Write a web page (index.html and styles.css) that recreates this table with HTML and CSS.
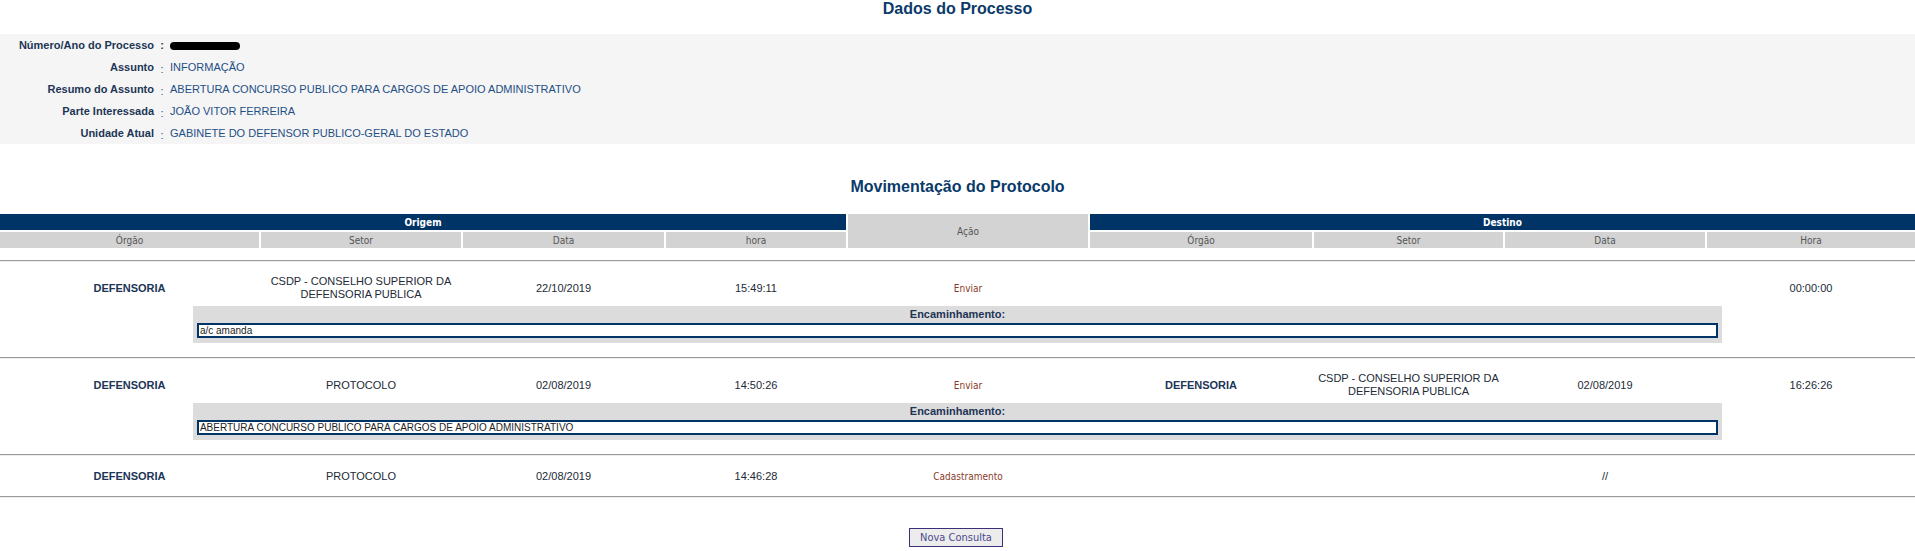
FILE: index.html
```html
<!DOCTYPE html>
<html lang="pt-BR">
<head>
<meta charset="utf-8">
<title>Dados do Processo</title>
<link rel="stylesheet" href="styles.css">
</head>
<body>
<h1 class="title">Dados do Processo</h1>
<div class="info">
  <div class="info-row"><span class="label">Número/Ano do Processo</span><span class="colon strong">:</span><span class="value"><span class="redacted"></span></span></div>
  <div class="info-row"><span class="label">Assunto</span><span class="colon">:</span><span class="value">INFORMAÇÃO</span></div>
  <div class="info-row"><span class="label">Resumo do Assunto</span><span class="colon">:</span><span class="value">ABERTURA CONCURSO PUBLICO PARA CARGOS DE APOIO ADMINISTRATIVO</span></div>
  <div class="info-row"><span class="label">Parte Interessada</span><span class="colon">:</span><span class="value">JOÃO VITOR FERREIRA</span></div>
  <div class="info-row"><span class="label">Unidade Atual</span><span class="colon">:</span><span class="value">GABINETE DO DEFENSOR PUBLICO-GERAL DO ESTADO</span></div>
</div>

<h2 class="title sub">Movimentação do Protocolo</h2>

<div class="mov-head cols">
  <div class="grp origem">Origem</div>
  <div class="acao-h">Ação</div>
  <div class="grp destino">Destino</div>
  <div class="sh">Órgão</div>
  <div class="sh">Setor</div>
  <div class="sh">Data</div>
  <div class="sh">hora</div>
  <div class="sh">Órgão</div>
  <div class="sh">Setor</div>
  <div class="sh">Data</div>
  <div class="sh">Hora</div>
</div>

<div class="rule"></div>

<div class="entry">
  <div class="cols row tall">
    <div class="org">DEFENSORIA</div>
    <div class="txt">CSDP - CONSELHO SUPERIOR DA DEFENSORIA PUBLICA</div>
    <div class="txt">22/10/2019</div>
    <div class="txt">15:49:11</div>
    <div class="acao">Enviar</div>
    <div class="org"></div>
    <div class="txt"></div>
    <div class="txt"></div>
    <div class="txt">00:00:00</div>
  </div>
  <div class="enc">
    <div class="enc-label">Encaminhamento:</div>
    <div class="enc-box">a/c amanda</div>
  </div>
</div>

<div class="rule"></div>

<div class="entry">
  <div class="cols row tall">
    <div class="org">DEFENSORIA</div>
    <div class="txt">PROTOCOLO</div>
    <div class="txt">02/08/2019</div>
    <div class="txt">14:50:26</div>
    <div class="acao">Enviar</div>
    <div class="org">DEFENSORIA</div>
    <div class="txt">CSDP - CONSELHO SUPERIOR DA DEFENSORIA PUBLICA</div>
    <div class="txt">02/08/2019</div>
    <div class="txt">16:26:26</div>
  </div>
  <div class="enc">
    <div class="enc-label">Encaminhamento:</div>
    <div class="enc-box">ABERTURA CONCURSO PUBLICO PARA CARGOS DE APOIO ADMINISTRATIVO</div>
  </div>
</div>

<div class="rule"></div>

<div class="entry">
  <div class="cols row">
    <div class="org">DEFENSORIA</div>
    <div class="txt">PROTOCOLO</div>
    <div class="txt">02/08/2019</div>
    <div class="txt">14:46:28</div>
    <div class="acao">Cadastramento</div>
    <div class="org"></div>
    <div class="txt"></div>
    <div class="txt">//</div>
    <div class="txt"></div>
  </div>
</div>

<div class="rule"></div>

<div class="actions">
  <button class="btn" type="button">Nova Consulta</button>
</div>
</body>
</html>
```

FILE: styles.css
```css
html, body {
  margin: 0;
  padding: 0;
  background: #ffffff;
}

body {
  font-family: "Liberation Sans", Arial, sans-serif;
  font-size: 11px;
  color: #222;
}

.title {
  margin: 0;
  height: 34px;
  font-size: 16px;
  line-height: 18px;
  font-weight: bold;
  text-align: center;
  color: #0a3a6a;
}

.title.sub {
  height: 36px;
  margin-top: 34px;
  box-sizing: border-box;
}

.info {
  background: #f5f5f5;
  display: flex;
  flex-direction: column;
}

.info-row {
  display: grid;
  grid-template-columns: 154px 16px 1fr;
  height: 22px;
  align-items: center;
  line-height: 13px;
}

.label {
  text-align: right;
  font-weight: bold;
  color: #1d3556;
}

.colon {
  text-align: center;
  color: #2a5a8c;
  position: relative;
  top: 2px;
}

.colon.strong {
  font-weight: bold;
  color: #1d3556;
  top: 0;
}

.value {
  color: #1f4f85;
}

.redacted {
  display: inline-block;
  width: 70px;
  height: 8px;
  border-radius: 5px;
  background: #000;
  vertical-align: middle;
}

.cols {
  display: grid;
  grid-template-columns: 259px 200px 201px 180px 240px 222px 189px 200px 1fr;
  column-gap: 2px;
}

.mov-head {
  grid-template-rows: 16px 16px;
  row-gap: 2px;
  font-family: "DejaVu Sans Condensed", "DejaVu Sans", sans-serif;
  font-size: 10px;
}

.grp {
  background: #003366;
  color: #ffffff;
  font-weight: bold;
  display: flex;
  align-items: center;
  justify-content: center;
}

.origem {
  grid-column: 1 / 5;
  grid-row: 1;
}

.destino {
  grid-column: 6 / 10;
  grid-row: 1;
}

.acao-h {
  grid-column: 5;
  grid-row: 1 / 3;
  background: #d3d3d3;
  color: #555;
  display: flex;
  align-items: center;
  justify-content: center;
}

.sh {
  grid-row: 2;
  background: #d3d3d3;
  color: #555;
  display: flex;
  align-items: center;
  justify-content: center;
}

.rule {
  height: 0;
  border-top: 1px solid #9a9a9a;
  border-bottom: 1px solid #eeeeee;
  margin-top: 12px;
}

.entry + .rule {
  margin-top: 0;
}

.row {
  height: 40px;
  align-items: center;
  line-height: 13px;
}

.row.tall {
  height: 44px;
  padding-top: 8px;
  box-sizing: border-box;
}

.row > div {
  text-align: center;
  padding: 0 2px;
}

.org {
  font-weight: bold;
  color: #1d3556;
}

.txt {
  color: #222a36;
}

.acao {
  font-family: "DejaVu Sans Condensed", "DejaVu Sans", sans-serif;
  font-size: 10px;
  color: #8a3b2b;
}

.enc {
  width: 79.85%;
  margin: 0 auto 14px;
  background: #dcdcdc;
  padding: 0 4px 5px;
  box-sizing: border-box;
}

.enc-label {
  height: 17px;
  line-height: 17px;
  text-align: center;
  font-weight: bold;
  color: #1d3556;
}

.enc-box {
  background: #fff;
  border: 2px solid #003366;
  height: 11px;
  line-height: 11px;
  font-size: 10px;
  color: #222;
  padding: 0 1px;
}

.actions {
  display: flex;
  justify-content: center;
  padding-top: 30px;
}

.btn {
  font-family: "DejaVu Sans Condensed", "DejaVu Sans", sans-serif;
  font-size: 11px;
  color: #4a4a8c;
  background: #ececec;
  border: 1px solid #3b2f7a;
  width: 94px;
  height: 19px;
  padding: 0;
  line-height: 17px;
  margin-right: 3px;
}
```
